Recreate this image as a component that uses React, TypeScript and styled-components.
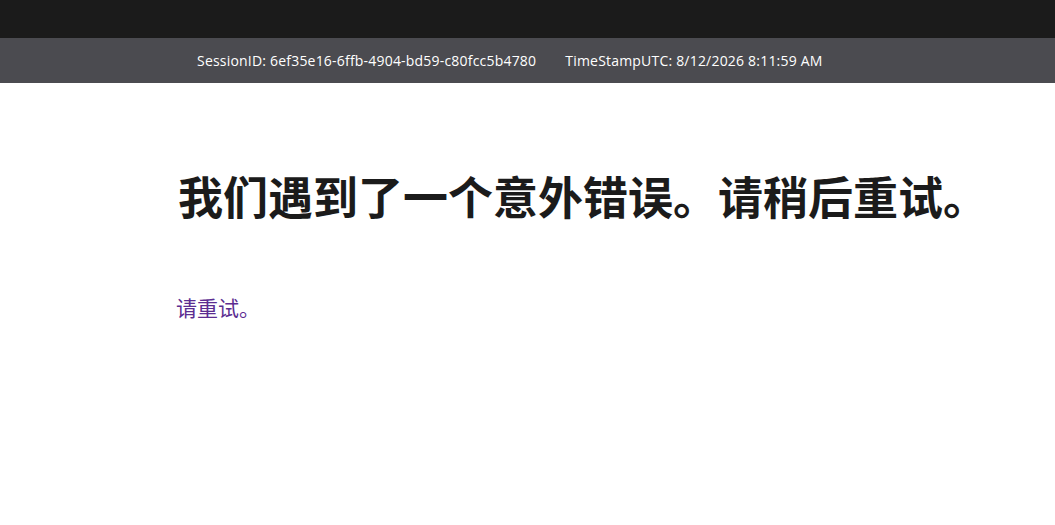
import styled, { createGlobalStyle } from 'styled-components';

const GlobalStyle = createGlobalStyle`
    html, body {
        margin: 0;
        padding: 0;
        background: #FFFFFF;
        font-family: "Segoe UI", "Open Sans", "Noto Sans", "Noto Sans CJK SC", sans-serif;
    }
`

const TopBar = styled.header`
    height: 38px;
    background-color: #1B1B1B;
`

const InfoBar = styled.div`
    height: 45px;
    background-color: #4B4B50;
    color: #FFFFFF;
    padding-left: 197px;

    display: flex;
    align-items: center;
    gap: 29px;
    font-size: 14px;
    letter-spacing: 0.2px;
`

const Main = styled.main`
    padding: 87px 0 0 176px;
`

const Title = styled.h1`
    margin: 0 0 0 2px;
    font-family: "Noto Sans CJK SC", sans-serif;
    font-size: 45px;
    font-weight: 700;
    line-height: 52px;
    color: #1B1B1B;
`

const RetryLink = styled.a`
    display: inline-block;
    margin-top: 71px;
    font-family: "Noto Sans CJK SC", sans-serif;
    font-size: 21px;
    line-height: 28px;
    color: #5C2D91;
    text-decoration: none;
    cursor: pointer;
`

const App = () => {
    return (
        <>
            <GlobalStyle/>
            <TopBar/>
            <InfoBar>
                <span>SessionID: 6ef35e16-6ffb-4904-bd59-c80fcc5b4780</span>
                <span>TimeStampUTC: 8/12/2026 8:11:59 AM</span>
            </InfoBar>
            <Main>
                <Title>我们遇到了一个意外错误。请稍后重试。</Title>
                <RetryLink href="#">请重试。</RetryLink>
            </Main>
        </>
    );
}

export default App;
